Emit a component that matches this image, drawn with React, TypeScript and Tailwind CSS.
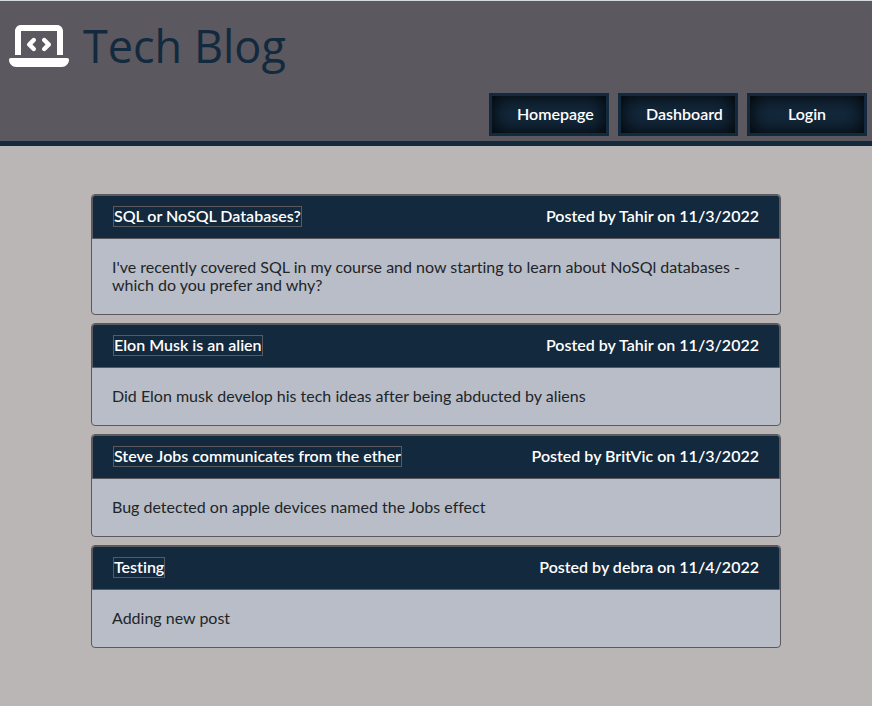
import { FaLaptopCode } from "react-icons/fa6";

type Post = { title: string; author: string; date: string; body: string };

const posts: Post[] = [
  {
    title: "SQL or NoSQL Databases?",
    author: "Tahir",
    date: "11/3/2022",
    body: "I've recently covered SQL in my course and now starting to learn about NoSQl databases - which do you prefer and why?",
  },
  {
    title: "Elon Musk is an alien",
    author: "Tahir",
    date: "11/3/2022",
    body: "Did Elon musk develop his tech ideas after being abducted by aliens",
  },
  {
    title: "Steve Jobs communicates from the ether",
    author: "BritVic",
    date: "11/3/2022",
    body: "Bug detected on apple devices named the Jobs effect",
  },
  { title: "Testing", author: "debra", date: "11/4/2022", body: "Adding new post" },
];

const links = ["Homepage", "Dashboard", "Login"];

function Header() {
  return (
    <header className="border-t border-b-5 border-t-[#d5dcdc] border-b-[#13293d] bg-[#5b585f]">
      <div className="flex h-[90px] items-center gap-[14px] px-[9px]">
        <FaLaptopCode className="h-12 w-[60px] text-white" aria-hidden="true" />
        <h1 className="font-['Open_Sans',sans-serif] text-[45px] leading-[56px] text-[#13293d]">Tech Blog</h1>
      </div>
      <nav className="flex justify-end gap-[9px] pt-0.5 pr-[5px] pb-[5px]">
        {links.map((label) => (
          <a
            key={label}
            href="#"
            className="flex h-[43px] w-[120px] items-center border-3 border-[#13293d] bg-[#13293d] px-[25px] pb-0.5 font-semibold text-white shadow-[inset_0_0_20px_#000]"
          >
            <span className="min-w-full text-center whitespace-nowrap">{label}</span>
          </a>
        ))}
      </nav>
    </header>
  );
}

function PostCard({ post }: { post: Post }) {
  return (
    <article className="rounded-[4px] border border-[#5b585f] bg-[#b8bdc7]">
      <div className="flex h-11 items-center justify-between rounded-t-[3px] border border-[#5b585f] bg-[#13293d] px-5 pb-0.5 font-semibold text-white">
        <a href="#" className="border border-[#5b585f] pb-0.5 leading-[17px]">
          {post.title}
        </a>
        <span>
          Posted by {post.author} on {post.date}
        </span>
      </div>
      <p className="px-5 pt-[19px] pb-5 leading-[18px] text-[#212529]">{post.body}</p>
    </article>
  );
}

export default function App() {
  return (
    <div className="min-h-screen bg-[#bab6b5] font-['Lato',sans-serif] text-[16px] [font-variant-ligatures:none]">
      <Header />
      <main className="mx-auto flex max-w-[1140px] flex-col gap-2 px-[91px] py-12">
        {posts.map((post) => (
          <PostCard key={post.title} post={post} />
        ))}
      </main>
    </div>
  );
}
